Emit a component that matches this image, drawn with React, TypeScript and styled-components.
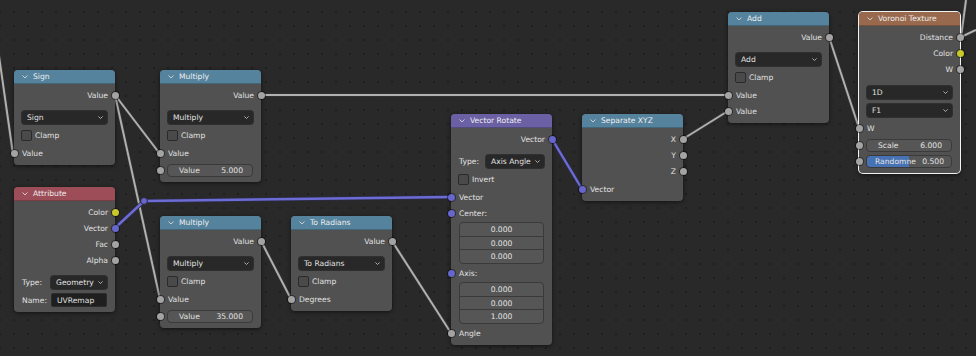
import React from 'react';
import { styled, createGlobalStyle } from 'styled-components';

const GlobalStyle = createGlobalStyle`
    * { box-sizing: border-box; }
    body { margin: 0; background: #292929; }
`

const COLORS = {
    converter: '#55839d',
    vector: '#6a60a3',
    texture: '#98694d',
    input: '#9c4d57',
    grey: '#a3a3a3',
    yellow: '#c8c82a',
    purple: '#6666cc',
};

const Canvas = styled.div`
    position: relative;
    width: 976px;
    height: 356px;
    overflow: hidden;
    background-color: #292929;
    background-image: radial-gradient(circle at center, #1f1f1f 0.8px, transparent 1.3px);
    background-size: 14px 14px;
    background-position: 7px 5px;
    font-family: "DejaVu Sans", "Liberation Sans", sans-serif;
    font-size: 7.6px;
    color: #e2e2e2;
`

const Wires = styled.svg`
    position: absolute;
    left: 0;
    top: 0;
`

const NodeFrame = styled.div<{ $x: number; $y: number; $active?: boolean }>`
    position: absolute;
    left: ${ p => p.$x }px;
    top: ${ p => p.$y }px;
    width: 101px;
    background: #515151;
    border-radius: 4px;
    box-shadow: ${ p => p.$active
        ? '0 0 0 1px #f2f2f2, 0 2px 5px rgba(0,0,0,0.55)'
        : '0 1px 4px rgba(0,0,0,0.55)' };
`

const Header = styled.div<{ $color: string }>`
    height: 14px;
    display: flex;
    align-items: center;
    gap: 5px;
    padding-left: 8px;
    background: ${ p => p.$color };
    border-radius: 4px 4px 0 0;
    border-bottom: 1px solid rgba(0,0,0,0.22);
    color: #eeeeee;
    white-space: nowrap;
`

const Body = styled.div`
    display: flex;
    flex-direction: column;
    padding: 3px 0 4px;
`

const Row = styled.div<{ $gap?: number; $out?: boolean }>`
    position: relative;
    height: 16px;
    margin-top: ${ p => p.$gap ?? 0 }px;
    display: flex;
    align-items: center;
    justify-content: ${ p => p.$out ? 'flex-end' : 'flex-start' };
    padding: ${ p => p.$out ? '0 7px 0 8px' : '0 8px 0 8px' };
    white-space: nowrap;
`

const Socket = styled.span<{ $side: 'left' | 'right'; $color: string }>`
    position: absolute;
    top: 50%;
    ${ p => p.$side }: -3.5px;
    width: 7px;
    height: 7px;
    margin-top: -3.5px;
    border-radius: 50%;
    background: ${ p => p.$color };
    box-shadow: 0 0 0 1px rgba(0,0,0,0.45);
`

const Dropdown = styled.div<{ $w?: number }>`
    ${ p => p.$w ? `width: ${ p.$w }px; margin-left: auto;` : 'flex: 1;' }
    height: 13px;
    display: flex;
    align-items: center;
    justify-content: space-between;
    gap: 3px;
    padding: 0 4px 0 5px;
    background: #282828;
    border-radius: 3px;
    box-shadow: 0 0 0 1px #2f2f2f;
    overflow: hidden;
`

const TextBox = styled.div`
    width: 56px;
    margin-left: auto;
    height: 14px;
    display: flex;
    align-items: center;
    padding: 0 5px;
    background: #1f1f1f;
    border-radius: 2px;
    border: 1px solid #2c2c2c;
`

const Checkbox = styled.span`
    width: 11px;
    height: 11px;
    margin-left: -1px;
    margin-right: 3px;
    border-radius: 2px;
    background: #4a4a4a;
    border: 1px solid #2a2a2a;
`

const Field = styled.div<{ $fill?: number }>`
    flex: 1;
    height: 13px;
    margin-left: -1px;
    display: flex;
    align-items: center;
    justify-content: space-between;
    gap: 3px;
    padding: ${ p => p.$fill ? '0 7px 0 8px' : '0 9px 0 11px' };
    border: 1px solid #3a3a3a;
    border-radius: 4px;
    background: ${ p => p.$fill
        ? `linear-gradient(to right, #4772b3 ${ p.$fill }%, #565656 ${ p.$fill }%)`
        : '#565656' };
    overflow: hidden;
`

const VectorStack = styled.div`
    height: 42px;
    margin: 1px 8px 0;
    display: flex;
    flex-direction: column;
    border: 1px solid #3a3a3a;
    border-radius: 4px;
    background: #565656;
    overflow: hidden;
`

const VectorCell = styled.div`
    flex: 1;
    display: flex;
    align-items: center;
    justify-content: center;
    & + & { border-top: 1px solid #3a3a3a; }
`

const Chevron = ({ size = 6 }: { size?: number }) => (
    <svg width={ size } height={ size * 0.6 } viewBox="0 0 6 3.6" style={{ flexShrink: 0 }}>
        <polyline points="0.5,0.5 3,3 5.5,0.5" fill="none" stroke="#d8d8d8" strokeWidth="0.9"/>
    </svg>
);

type NodeProps = { x: number; y: number; title: string; color: string; active?: boolean; children: React.ReactNode };

const Node = ({ x, y, title, color, active, children }: NodeProps) => (
    <NodeFrame $x={ x } $y={ y } $active={ active }>
        <Header $color={ color }>
            <Chevron size={ 6 }/>
            { title }
        </Header>
        <Body>{ children }</Body>
    </NodeFrame>
);

const Out = ({ label, color = COLORS.grey, gap }: { label: string; color?: string; gap?: number }) => (
    <Row $out $gap={ gap }>
        { label }
        <Socket $side="right" $color={ color }/>
    </Row>
);

const In = ({ label, color = COLORS.grey, gap }: { label: string; color?: string; gap?: number }) => (
    <Row $gap={ gap }>
        <Socket $side="left" $color={ color }/>
        { label }
    </Row>
);

const Select = ({ label, gap = 6 }: { label: string; gap?: number }) => (
    <Row $gap={ gap }>
        <Dropdown>{ label }<Chevron size={ 5 }/></Dropdown>
    </Row>
);

const Toggle = ({ label, gap = 2 }: { label: string; gap?: number }) => (
    <Row $gap={ gap }>
        <Checkbox/>{ label }
    </Row>
);

const ValueInput = ({ label, value, gap = 1, fill }: { label: string; value: string; gap?: number; fill?: number }) => (
    <Row $gap={ gap }>
        <Socket $side="left" $color={ COLORS.grey }/>
        <Field $fill={ fill }><span>{ label }</span><span>{ value }</span></Field>
    </Row>
);

const WIRES = [
    { d: 'M-9 0 L13 154', purple: false },
    { d: 'M115 95 L160 154', purple: false },
    { d: 'M115 95 L160 299', purple: false },
    { d: 'M261 95 L728 95', purple: false },
    { d: 'M261 241 L291 299', purple: false },
    { d: 'M392 241 L451 333', purple: false },
    { d: 'M683 139 L728 111', purple: false },
    { d: 'M829 37 L859 128', purple: false },
    { d: 'M961 37 L966 0', purple: false },
    { d: 'M961 37 L976 30', purple: false },
    { d: 'M115 228 L144 201 L451 197', purple: true },
    { d: 'M552 139 L582 189', purple: true },
];

const App = () => {
    return (
        <Canvas>
            <GlobalStyle/>
            <Wires width="976" height="356">
                { WIRES.map((w, i) => (
                    <g key={ i } fill="none" strokeLinejoin="round">
                        <path d={ w.d } stroke={ w.purple ? '#2c2c4c' : '#333333' } strokeWidth={ w.purple ? 4 : 3.6 }/>
                        <path d={ w.d } stroke={ w.purple ? '#6c6cd4' : '#b0b0b0' } strokeWidth={ w.purple ? 2.4 : 2 }/>
                    </g>
                )) }
                <circle cx="144" cy="201" r="3.4" fill={ COLORS.purple } stroke="#1e1e1e" strokeWidth="0.8"/>
            </Wires>

            <Node x={ 14 } y={ 70 } title="Sign" color={ COLORS.converter }>
                <Out label="Value"/>
                <Select label="Sign"/>
                <Toggle label="Clamp"/>
                <In label="Value" gap={ 2 }/>
            </Node>

            <Node x={ 160 } y={ 70 } title="Multiply" color={ COLORS.converter }>
                <Out label="Value"/>
                <Select label="Multiply"/>
                <Toggle label="Clamp"/>
                <In label="Value" gap={ 2 }/>
                <ValueInput label="Value" value="5.000"/>
            </Node>

            <Node x={ 14 } y={ 187 } title="Attribute" color={ COLORS.input }>
                <Out label="Color" color={ COLORS.yellow }/>
                <Out label="Vector" color={ COLORS.purple }/>
                <Out label="Fac"/>
                <Out label="Alpha"/>
                <Row $gap={ 6 }>
                    Type:
                    <Dropdown $w={ 56 }>Geometry<Chevron size={ 5 }/></Dropdown>
                </Row>
                <Row $gap={ 2 }>
                    Name:
                    <TextBox>UVRemap</TextBox>
                </Row>
            </Node>

            <Node x={ 160 } y={ 216 } title="Multiply" color={ COLORS.converter }>
                <Out label="Value"/>
                <Select label="Multiply"/>
                <Toggle label="Clamp"/>
                <In label="Value" gap={ 2 }/>
                <ValueInput label="Value" value="35.000"/>
            </Node>

            <Node x={ 291 } y={ 216 } title="To Radians" color={ COLORS.converter }>
                <Out label="Value"/>
                <Select label="To Radians"/>
                <Toggle label="Clamp"/>
                <In label="Degrees" gap={ 2 }/>
            </Node>

            <Node x={ 451 } y={ 114 } title="Vector Rotate" color={ COLORS.vector }>
                <Out label="Vector" color={ COLORS.purple }/>
                <Row $gap={ 6 }>
                    Type:
                    <Dropdown $w={ 58 }>Axis Angle<Chevron size={ 5 }/></Dropdown>
                </Row>
                <Toggle label="Invert"/>
                <In label="Vector" color={ COLORS.purple } gap={ 2 }/>
                <In label="Center:" color={ COLORS.purple }/>
                <VectorStack>
                    <VectorCell>0.000</VectorCell>
                    <VectorCell>0.000</VectorCell>
                    <VectorCell>0.000</VectorCell>
                </VectorStack>
                <In label="Axis:" color={ COLORS.purple } gap={ 1 }/>
                <VectorStack>
                    <VectorCell>0.000</VectorCell>
                    <VectorCell>0.000</VectorCell>
                    <VectorCell>1.000</VectorCell>
                </VectorStack>
                <In label="Angle" gap={ 1 }/>
            </Node>

            <Node x={ 582 } y={ 114 } title="Separate XYZ" color={ COLORS.converter }>
                <Out label="X"/>
                <Out label="Y"/>
                <Out label="Z"/>
                <In label="Vector" color={ COLORS.purple } gap={ 2 }/>
            </Node>

            <Node x={ 728 } y={ 12 } title="Add" color={ COLORS.converter }>
                <Out label="Value"/>
                <Select label="Add"/>
                <Toggle label="Clamp"/>
                <In label="Value" gap={ 2 }/>
                <In label="Value"/>
            </Node>

            <Node x={ 859 } y={ 12 } title="Voronoi Texture" color={ COLORS.texture } active>
                <Out label="Distance"/>
                <Out label="Color" color={ COLORS.yellow }/>
                <Out label="W"/>
                <Select label="1D" gap={ 7 }/>
                <Select label="F1" gap={ 2 }/>
                <In label="W" gap={ 2 }/>
                <ValueInput label="Scale" value="6.000"/>
                <ValueInput label="Randomne" value="0.500" gap={ 0 } fill={ 50 }/>
            </Node>
        </Canvas>
    );
}

export default App;
